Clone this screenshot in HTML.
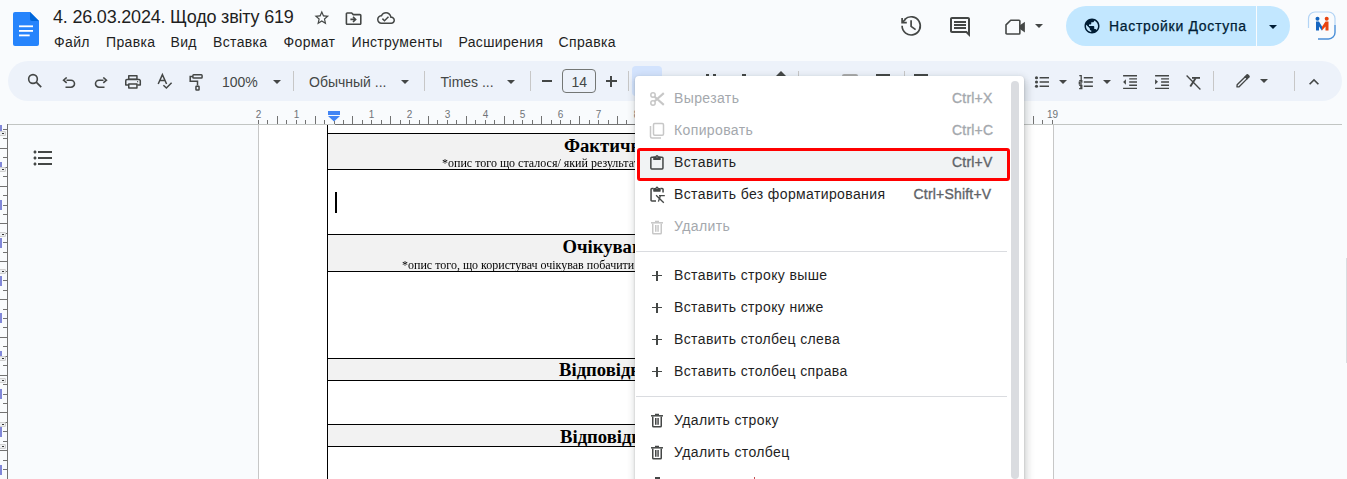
<!DOCTYPE html>
<html><head><meta charset="utf-8">
<style>
*{box-sizing:border-box;margin:0;padding:0}
html,body{width:1347px;height:479px;overflow:hidden;background:#f9fbfd;font-family:"Liberation Sans",sans-serif;color:#1f1f1f}
.a{position:absolute}
.t{position:absolute;white-space:pre;line-height:1}
svg{position:absolute;display:block}
.ic{fill:#444746}
.mb{font-size:14px;color:#1f1f1f;letter-spacing:0.35px}
.sep{position:absolute;width:1px;background:#c7c7c7}
.rl{font-size:10px;color:#6f7378}
.hl{left:327px;width:660px;height:1px;background:#000}
.ser{font-family:"Liberation Serif",serif;font-weight:bold;font-size:18.67px;color:#000}
.sub{font-family:"Liberation Serif",serif;font-size:12px;color:#000;transform:scaleY(1.12);transform-origin:0 0}
.mi{font-size:14px;letter-spacing:0.38px;color:#1f1f1f}
.sc{font-size:14px;-webkit-text-stroke:0.35px currentColor;letter-spacing:0.2px;color:#5f6368}
.dis{color:#a4a8ad}
.plus{left:652px;width:10px;height:1.3px;background:#444746}
.plusv{left:656.35px;width:1.3px;height:10px;background:#444746}
.arr{position:absolute;width:0;height:0;border-left:4px solid transparent;border-right:4px solid transparent;border-top:4.5px solid #444746}
</style></head><body>

<!-- doc icon -->
<svg style="left:13px;top:12px" width="26" height="34" viewBox="0 0 26 34">
 <path d="M2 0h15l9 9v23a2 2 0 0 1-2 2H2a2 2 0 0 1-2-2V2a2 2 0 0 1 2-2z" fill="#2684fc"/>
 <path d="M17 0l9 9h-7a2 2 0 0 1-2-2z" fill="#0066da"/>
 <rect x="6" y="13.4" width="14" height="1.8" fill="#fff"/>
 <rect x="6" y="18" width="14" height="1.8" fill="#fff"/>
 <rect x="6" y="22.5" width="10.7" height="1.8" fill="#fff"/>
</svg>

<div class="t" style="left:53px;top:8.2px;font-size:18px;color:#1f1f1f;letter-spacing:-0.2px">4. 26.03.2024. Щодо звіту 619</div>

<!-- title icons -->
<svg style="left:313px;top:9.2px" width="17.6" height="17.6" viewBox="0 0 24 24"><path class="ic" d="M22 9.24l-7.19-.62L12 2 9.19 8.63 2 9.24l5.46 4.73L5.82 21 12 17.27 18.18 21l-1.63-7.03L22 9.24zM12 15.4l-3.76 2.27 1-4.28-3.32-2.88 4.38-.38L12 6.1l1.71 4.04 4.38.38-3.32 2.88 1 4.28L12 15.4z"/></svg>
<svg style="left:344.4px;top:8.8px" width="19.2" height="19.2" viewBox="0 0 24 24"><path class="ic" d="M20 6h-8l-2-2H4c-1.1 0-1.99.9-1.99 2L2 18c0 1.1.9 2 2 2h16c1.1 0 2-.9 2-2V8c0-1.1-.9-2-2-2zm0 12H4V6h5.17l2 2H20v10zm-7.84-6H8v2h4.16l-1.59 1.59L11.99 17 16 13.01 11.99 9l-1.41 1.41L12.16 12z"/></svg>
<svg style="left:377.1px;top:9px" width="18" height="18" viewBox="0 0 24 24"><path class="ic" d="M19.35 10.04C18.67 6.59 15.64 4 12 4 9.11 4 6.6 5.640 5.35 8.04 2.34 8.36 0 10.91 0 14c0 3.31 2.69 6 6 6h13c2.76 0 5-2.24 5-5 0-2.64-2.05-4.78-4.650-4.96zM19 18H6c-2.21 0-4-1.79-4-4 0-2.05 1.53-3.76 3.56-3.97l1.07-.11.5-.95C8.08 7.14 9.94 6 12 6c2.62 0 4.88 1.86 5.39 4.43l.3 1.5 1.53.11c1.56.1 2.78 1.41 2.78 2.96 0 1.65-1.35 3-3 3zm-9-3.82l-2.09-2.09L6.5 13.5 10 17l6.01-6.01-1.41-1.41z"/></svg>

<!-- menu bar -->
<div class="t mb" style="left:54px;top:35px">Файл</div>
<div class="t mb" style="left:106px;top:35px">Правка</div>
<div class="t mb" style="left:170.5px;top:35px">Вид</div>
<div class="t mb" style="left:213px;top:35px">Вставка</div>
<div class="t mb" style="left:283.5px;top:35px">Формат</div>
<div class="t mb" style="left:351.5px;top:35px">Инструменты</div>
<div class="t mb" style="left:458.5px;top:35px">Расширения</div>
<div class="t mb" style="left:558.5px;top:35px">Справка</div>

<!-- right header -->
<svg style="left:896px;top:12px" width="30" height="28" viewBox="896 12 30 28"><g fill="none" stroke="#444746" stroke-width="1.7"><path d="M902.1 25.8A9.1 9.1 0 1 0 904.8 19.4"/><path d="M902.1 18.1V22.6H906.8" stroke-linejoin="miter"/><path d="M902.6 22.1L905.6 19.1"/><path d="M911.1 20.2V26.4L915.6 29.6"/></g></svg>
<svg style="left:948px;top:15px" width="24" height="24" viewBox="0 0 24 24"><path class="ic" d="M21.99 4c0-1.1-.89-2-1.99-2H4c-1.1 0-2 .9-2 2v12c0 1.1.9 2 2 2h14l4 4-.01-18zM20 4v13.17L18.83 16H4V4h16zM6 12h12v2H6zm0-3h12v2H6zm0-3h12v2H6z"/></svg>
<svg style="left:1000px;top:15px" width="30" height="24" viewBox="1000 15 30 24"><path d="M1010.7 20.2H1019a.85 .85 0 0 1 .85.85V33.15a.85 .85 0 0 1-.85.85H1006.85a.85 .85 0 0 1-.85-.85V24.9z" fill="none" stroke="#444746" stroke-width="1.6" stroke-linejoin="round"/><path d="M1019.9 25.2L1024.9 21.8V32.4L1019.9 29z" fill="#444746"/></svg>
<div class="arr" style="left:1035px;top:24px"></div>

<div class="a" style="left:1066px;top:6px;width:224px;height:40px;border-radius:20px;background:#c2e7ff"></div>
<div class="a" style="left:1256px;top:6px;width:1px;height:40px;background:#f9fbfd"></div>
<svg style="left:1083px;top:17px" width="18" height="18" viewBox="0 0 24 24"><path fill="#001d35" d="M12 2C6.48 2 2 6.48 2 12s4.48 10 10 10 10-4.48 10-10S17.52 2 12 2zm-1 17.93c-3.95-.49-7-3.85-7-7.93 0-.62.08-1.21.21-1.79L9 15v1c0 1.1.9 2 2 2v1.93zm6.9-2.54c-.26-.81-1-1.39-1.9-1.39h-1v-3c0-.55-.45-1-1-1H8v-2h2c.55 0 1-.45 1-1V7h2c1.1 0 2-.9 2-2v-.41c2.93 1.19 5 4.060 5 7.41 0 2.08-.8 3.97-2.1 5.39z"/></svg>
<div class="t" style="left:1109px;top:19px;font-size:14px;-webkit-text-stroke:0.25px #001d35;color:#001d35;letter-spacing:0.7px">Настройки Доступа</div>
<div class="arr" style="left:1269px;top:24.5px;border-top-color:#001d35"></div>

<!-- avatar -->
<svg style="left:1307px;top:11px" width="30" height="30" viewBox="0 0 30 30">
 <path d="M1.5 17V7.5a6.5 6.5 0 0 1 6.5-6.5H21.5a6.5 6.5 0 0 1 6.5 6.5V14" fill="none" stroke="#b3d4f5" stroke-width="1.2"/><path d="M28 14V21.5a6.5 6.5 0 0 1-6.5 6.5H11" fill="none" stroke="#4a8fd8" stroke-width="1.4"/>
 <circle cx="10.5" cy="7.8" r="2" fill="#1565c0"/>
 <circle cx="19.7" cy="7.8" r="2" fill="#e8430f"/>
 <path d="M9 10.5h3l3 5 0 4.3-3-4.3v4h-3z" fill="#1565c0"/>
 <path d="M21.5 10.5h-3l-3.5 5.2v3.9l3.5-4.2v4.2h3z" fill="#e8430f"/>
</svg>

<!-- toolbar -->
<div class="a" style="left:8px;top:61px;width:1334px;height:40px;border-radius:20px;background:#edf2fa"></div>

<svg style="left:20px;top:68px" width="30" height="27" viewBox="20 68 30 27"><circle cx="33" cy="79" r="4.35" fill="none" stroke="#444746" stroke-width="1.6"/><path d="M36.2 82.2L41.2 87.2" stroke="#444746" stroke-width="1.7"/></svg>
<svg style="left:62px;top:77px" width="14" height="14" viewBox="0 0 14 14"><path d="M4.5 3.2H9a3.5 3.5 0 0 1 0 7H3.5" fill="none" stroke="#444746" stroke-width="1.6"/><path d="M4.7 0.5L1.6 3.2l3.1 2.7" fill="none" stroke="#444746" stroke-width="1.6"/></svg>
<svg style="left:94px;top:77px" width="14" height="14" viewBox="0 0 14 14"><path d="M9.5 3.2H5a3.5 3.5 0 0 0 0 7H10.5" fill="none" stroke="#444746" stroke-width="1.6"/><path d="M9.3 0.5l3.1 2.7-3.1 2.7" fill="none" stroke="#444746" stroke-width="1.6"/></svg>
<svg style="left:118px;top:68px" width="90" height="27" viewBox="118 68 90 27">
 <g fill="none" stroke="#444746" stroke-width="1.5" stroke-linejoin="round">
  <rect x="128.75" y="75.75" width="8.2" height="3.5"/>
  <path d="M128.5 85H125.75V80.8a1.2 1.2 0 0 1 1.2-1.2H139.1a1.2 1.2 0 0 1 1.2 1.2V85H137.3"/>
  <rect x="128.75" y="83.95" width="8.2" height="4"/>
  <path d="M158.2 84L162.4 74.6L166.6 84M159.8 80.4H165" stroke-linejoin="miter"/>
  <path d="M163.4 85.2L166.4 88L171.6 82.8" stroke-linejoin="miter"/>
  <rect x="192.9" y="74.85" width="9.2" height="3.2" rx="0.8"/>
  <path d="M192.9 76.45H190.2V81.2H197.5V85.5" stroke-linejoin="miter"/>
  <rect x="195.95" y="86.15" width="3.1" height="3.8" rx="0.5"/>
 </g>
 <circle cx="137.6" cy="81.7" r="0.6" fill="#444746"/>
</svg>
<div class="t" style="left:222px;top:75px;font-size:14px;color:#444746">100%</div>
<div class="arr" style="left:272.5px;top:80px"></div>
<div class="sep" style="left:293px;top:71px;height:20px"></div>
<div class="t" style="left:309px;top:75px;font-size:14px;color:#444746">Обычный ...</div>
<div class="arr" style="left:401px;top:80px"></div>
<div class="sep" style="left:424px;top:71px;height:20px"></div>
<div class="t" style="left:440.5px;top:75px;font-size:14px;color:#444746">Times ...</div>
<div class="arr" style="left:507px;top:80px"></div>
<div class="sep" style="left:530px;top:71px;height:20px"></div>
<div class="a" style="left:541.5px;top:80.2px;width:10.5px;height:1.6px;background:#444746"></div>
<div class="a" style="left:562px;top:69px;width:34px;height:24px;border:1px solid #747775;border-radius:4px"></div>
<div class="t" style="left:571.5px;top:75px;font-size:14px;color:#444746">14</div>
<div class="a" style="left:605.5px;top:80.2px;width:11px;height:1.6px;background:#444746"></div>
<div class="a" style="left:610.2px;top:75.5px;width:1.6px;height:11px;background:#444746"></div>
<div class="sep" style="left:627.5px;top:71px;height:20px"></div>
<div class="a" style="left:632px;top:66px;width:30px;height:30px;border-radius:4px;background:#d3e3fd"></div>

<!-- tips of icons under menu -->
<div class="a" style="left:706px;top:74px;width:3px;height:3px;background:#444746"></div>
<div class="a" style="left:713px;top:74px;width:3px;height:3px;background:#444746"></div>
<div class="a" style="left:742px;top:74px;width:4px;height:3px;background:#444746"></div>
<svg style="left:776px;top:71px" width="10" height="6" viewBox="0 0 10 6"><path d="M5 0L10 5H0z" fill="#444746"/></svg>
<div class="sep" style="left:798px;top:71px;height:10px"></div>
<div class="a" style="left:842px;top:74px;width:16px;height:4px;border-radius:2px 2px 0 0;background:#aaa"></div>
<div class="a" style="left:876px;top:74px;width:14px;height:3px;background:#444746"></div>
<div class="sep" style="left:903.5px;top:71px;height:10px"></div>
<div class="a" style="left:914px;top:74px;width:14px;height:3px;background:#444746"></div>

<!-- right toolbar icons -->
<svg style="left:1030px;top:70px" width="180" height="24" viewBox="1030 70 180 24"><g fill="#444746"><circle cx="1036.5" cy="77.7" r="1.55"/><circle cx="1036.5" cy="82" r="1.55"/><circle cx="1036.5" cy="86.2" r="1.55"/><path d="M1125.9 79.2v5.5l-2.8-2.75z M1155.1 79.2v5.3l2.9-2.65z"/></g><g fill="none" stroke="#444746" stroke-width="1.35"><path d="M1039.6 77.7H1049M1039.6 82H1049M1039.6 86.2H1049"/><path d="M1083.8 77.7H1092.9M1083.8 82H1092.9M1083.8 86.2H1092.9"/><path d="M1079.3 75.6h1.9v4.4 M1079.2 80.7h2.6v1.5h-2.5v1.6h2.6 M1079.2 85.4h2.6v3.3h-2.7 M1080 87h1.8" stroke-width="1.3"/><path d="M1123.1 75.75H1137M1129.2 78.8H1137M1129.2 82H1137M1129.2 85.2H1137M1123.1 88.3H1137"/><path d="M1155.1 75.75H1169M1161.1 78.8H1169M1161.1 82H1169M1161.1 85.2H1169M1155.1 88.3H1169"/><path d="M1186.6 75.6L1200.4 89.4"/><path d="M1192 77.9H1200" stroke-width="1.8"/><path d="M1195.6 78.3L1190.3 86.6" stroke-width="1.9"/></g></svg>
<div class="arr" style="left:1059px;top:80px"></div>

<div class="arr" style="left:1103px;top:80px"></div>



<div class="sep" style="left:1213px;top:71px;height:20px"></div>
<svg style="left:1228px;top:68px" width="30" height="26" viewBox="1228 68 30 26"><g transform="translate(1243,80.9) rotate(-45)"><path d="M-6.9 -1.4H4.6V1.4H-6.9L-8.5 0z" fill="none" stroke="#444746" stroke-width="1.35" stroke-linejoin="round"/><path d="M4 -2.05H7.2a1 1 0 0 1 1 1V1.05a1 1 0 0 1-1 1H4z" fill="#444746"/></g></svg>
<div class="arr" style="left:1260px;top:79px"></div>
<div class="sep" style="left:1294px;top:71px;height:20px"></div>
<svg style="left:1304px;top:72px" width="20" height="20" viewBox="0 0 24 24"><path class="ic" d="M12 8l-6 6 1.41 1.41L12 10.83l4.59 4.58L18 14z"/></svg>

<!-- rulers -->
<div class="a" style="left:7px;top:124px;width:1335px;height:1px;background:#c2c5c3"></div>
<div class="a" style="left:334.5px;top:124px;width:680px;height:1px;background:#727272"></div>
<div class="a" style="left:1346px;top:258px;width:1px;height:105px;background:#dadce0"></div>
<div class="a" style="left:7px;top:124px;width:1px;height:355px;background:#727272"></div>
<div class="t rl" style="left:248.50px;top:109.5px;width:20px;text-align:center">2</div>
<div class="a" style="left:258px;top:120px;width:1px;height:4px;background:#727272"></div>
<div class="a" style="left:267px;top:120px;width:1px;height:4px;background:#727272"></div>
<div class="a" style="left:277px;top:116px;width:1px;height:8px;background:#727272"></div>
<div class="a" style="left:286px;top:120px;width:1px;height:4px;background:#727272"></div>
<div class="t rl" style="left:286.50px;top:109.5px;width:20px;text-align:center">1</div>
<div class="a" style="left:296px;top:120px;width:1px;height:4px;background:#727272"></div>
<div class="a" style="left:305px;top:120px;width:1px;height:4px;background:#727272"></div>
<div class="a" style="left:315px;top:116px;width:1px;height:8px;background:#727272"></div>
<div class="a" style="left:324px;top:120px;width:1px;height:4px;background:#727272"></div>
<div class="a" style="left:343px;top:120px;width:1px;height:4px;background:#727272"></div>
<div class="a" style="left:352px;top:116px;width:1px;height:8px;background:#727272"></div>
<div class="a" style="left:362px;top:120px;width:1px;height:4px;background:#727272"></div>
<div class="t rl" style="left:361.50px;top:109.5px;width:20px;text-align:center">1</div>
<div class="a" style="left:371px;top:120px;width:1px;height:4px;background:#727272"></div>
<div class="a" style="left:381px;top:120px;width:1px;height:4px;background:#727272"></div>
<div class="a" style="left:390px;top:116px;width:1px;height:8px;background:#727272"></div>
<div class="a" style="left:400px;top:120px;width:1px;height:4px;background:#727272"></div>
<div class="t rl" style="left:399.50px;top:109.5px;width:20px;text-align:center">2</div>
<div class="a" style="left:409px;top:120px;width:1px;height:4px;background:#727272"></div>
<div class="a" style="left:419px;top:120px;width:1px;height:4px;background:#727272"></div>
<div class="a" style="left:428px;top:116px;width:1px;height:8px;background:#727272"></div>
<div class="a" style="left:437px;top:120px;width:1px;height:4px;background:#727272"></div>
<div class="t rl" style="left:437.50px;top:109.5px;width:20px;text-align:center">3</div>
<div class="a" style="left:447px;top:120px;width:1px;height:4px;background:#727272"></div>
<div class="a" style="left:456px;top:120px;width:1px;height:4px;background:#727272"></div>
<div class="a" style="left:466px;top:116px;width:1px;height:8px;background:#727272"></div>
<div class="a" style="left:475px;top:120px;width:1px;height:4px;background:#727272"></div>
<div class="t rl" style="left:475.50px;top:109.5px;width:20px;text-align:center">4</div>
<div class="a" style="left:485px;top:120px;width:1px;height:4px;background:#727272"></div>
<div class="a" style="left:494px;top:120px;width:1px;height:4px;background:#727272"></div>
<div class="a" style="left:504px;top:116px;width:1px;height:8px;background:#727272"></div>
<div class="a" style="left:513px;top:120px;width:1px;height:4px;background:#727272"></div>
<div class="t rl" style="left:512.50px;top:109.5px;width:20px;text-align:center">5</div>
<div class="a" style="left:522px;top:120px;width:1px;height:4px;background:#727272"></div>
<div class="a" style="left:532px;top:120px;width:1px;height:4px;background:#727272"></div>
<div class="a" style="left:541px;top:116px;width:1px;height:8px;background:#727272"></div>
<div class="a" style="left:551px;top:120px;width:1px;height:4px;background:#727272"></div>
<div class="t rl" style="left:550.50px;top:109.5px;width:20px;text-align:center">6</div>
<div class="a" style="left:560px;top:120px;width:1px;height:4px;background:#727272"></div>
<div class="a" style="left:570px;top:120px;width:1px;height:4px;background:#727272"></div>
<div class="a" style="left:579px;top:116px;width:1px;height:8px;background:#727272"></div>
<div class="a" style="left:589px;top:120px;width:1px;height:4px;background:#727272"></div>
<div class="t rl" style="left:588.50px;top:109.5px;width:20px;text-align:center">7</div>
<div class="a" style="left:598px;top:120px;width:1px;height:4px;background:#727272"></div>
<div class="a" style="left:608px;top:120px;width:1px;height:4px;background:#727272"></div>
<div class="a" style="left:617px;top:116px;width:1px;height:8px;background:#727272"></div>
<div class="a" style="left:626px;top:120px;width:1px;height:4px;background:#727272"></div>
<div class="t rl" style="left:626.50px;top:109.5px;width:20px;text-align:center">8</div>
<div class="a" style="left:636px;top:120px;width:1px;height:4px;background:#727272"></div>
<div class="a" style="left:645px;top:120px;width:1px;height:4px;background:#727272"></div>
<div class="a" style="left:655px;top:116px;width:1px;height:8px;background:#727272"></div>
<div class="a" style="left:664px;top:120px;width:1px;height:4px;background:#727272"></div>
<div class="t rl" style="left:664.50px;top:109.5px;width:20px;text-align:center">9</div>
<div class="a" style="left:674px;top:120px;width:1px;height:4px;background:#727272"></div>
<div class="a" style="left:683px;top:120px;width:1px;height:4px;background:#727272"></div>
<div class="a" style="left:693px;top:116px;width:1px;height:8px;background:#727272"></div>
<div class="a" style="left:702px;top:120px;width:1px;height:4px;background:#727272"></div>
<div class="t rl" style="left:701.50px;top:109.5px;width:20px;text-align:center">10</div>
<div class="a" style="left:711px;top:120px;width:1px;height:4px;background:#727272"></div>
<div class="a" style="left:721px;top:120px;width:1px;height:4px;background:#727272"></div>
<div class="a" style="left:730px;top:116px;width:1px;height:8px;background:#727272"></div>
<div class="a" style="left:740px;top:120px;width:1px;height:4px;background:#727272"></div>
<div class="t rl" style="left:739.50px;top:109.5px;width:20px;text-align:center">11</div>
<div class="a" style="left:749px;top:120px;width:1px;height:4px;background:#727272"></div>
<div class="a" style="left:759px;top:120px;width:1px;height:4px;background:#727272"></div>
<div class="a" style="left:768px;top:116px;width:1px;height:8px;background:#727272"></div>
<div class="a" style="left:778px;top:120px;width:1px;height:4px;background:#727272"></div>
<div class="t rl" style="left:777.50px;top:109.5px;width:20px;text-align:center">12</div>
<div class="a" style="left:787px;top:120px;width:1px;height:4px;background:#727272"></div>
<div class="a" style="left:796px;top:120px;width:1px;height:4px;background:#727272"></div>
<div class="a" style="left:806px;top:116px;width:1px;height:8px;background:#727272"></div>
<div class="a" style="left:815px;top:120px;width:1px;height:4px;background:#727272"></div>
<div class="t rl" style="left:815.50px;top:109.5px;width:20px;text-align:center">13</div>
<div class="a" style="left:825px;top:120px;width:1px;height:4px;background:#727272"></div>
<div class="a" style="left:834px;top:120px;width:1px;height:4px;background:#727272"></div>
<div class="a" style="left:844px;top:116px;width:1px;height:8px;background:#727272"></div>
<div class="a" style="left:853px;top:120px;width:1px;height:4px;background:#727272"></div>
<div class="t rl" style="left:853.50px;top:109.5px;width:20px;text-align:center">14</div>
<div class="a" style="left:863px;top:120px;width:1px;height:4px;background:#727272"></div>
<div class="a" style="left:872px;top:120px;width:1px;height:4px;background:#727272"></div>
<div class="a" style="left:882px;top:116px;width:1px;height:8px;background:#727272"></div>
<div class="a" style="left:891px;top:120px;width:1px;height:4px;background:#727272"></div>
<div class="t rl" style="left:890.50px;top:109.5px;width:20px;text-align:center">15</div>
<div class="a" style="left:900px;top:120px;width:1px;height:4px;background:#727272"></div>
<div class="a" style="left:910px;top:120px;width:1px;height:4px;background:#727272"></div>
<div class="a" style="left:919px;top:116px;width:1px;height:8px;background:#727272"></div>
<div class="a" style="left:929px;top:120px;width:1px;height:4px;background:#727272"></div>
<div class="t rl" style="left:928.50px;top:109.5px;width:20px;text-align:center">16</div>
<div class="a" style="left:938px;top:120px;width:1px;height:4px;background:#727272"></div>
<div class="a" style="left:948px;top:120px;width:1px;height:4px;background:#727272"></div>
<div class="a" style="left:957px;top:116px;width:1px;height:8px;background:#727272"></div>
<div class="a" style="left:967px;top:120px;width:1px;height:4px;background:#727272"></div>
<div class="t rl" style="left:966.50px;top:109.5px;width:20px;text-align:center">17</div>
<div class="a" style="left:976px;top:120px;width:1px;height:4px;background:#727272"></div>
<div class="a" style="left:985px;top:120px;width:1px;height:4px;background:#727272"></div>
<div class="a" style="left:995px;top:116px;width:1px;height:8px;background:#727272"></div>
<div class="a" style="left:1004px;top:120px;width:1px;height:4px;background:#727272"></div>
<div class="t rl" style="left:1004.50px;top:109.5px;width:20px;text-align:center">18</div>
<div class="a" style="left:1014px;top:120px;width:1px;height:4px;background:#727272"></div>
<div class="a" style="left:1023px;top:120px;width:1px;height:4px;background:#727272"></div>
<div class="a" style="left:1033px;top:116px;width:1px;height:8px;background:#727272"></div>
<div class="a" style="left:1042px;top:120px;width:1px;height:4px;background:#727272"></div>
<div class="t rl" style="left:1042.50px;top:109.5px;width:20px;text-align:center">19</div>
<div class="a" style="left:1052px;top:120px;width:1px;height:4px;background:#727272"></div>
<div class="a" style="left:0px;top:124.50px;width:1.6px;height:10px;background:#4f56c8;opacity:.7"></div>
<div class="a" style="left:3px;top:129px;width:4px;height:1px;background:#727272"></div>
<div class="a" style="left:3px;top:138px;width:4px;height:1px;background:#727272"></div>
<div class="a" style="left:0px;top:148px;width:7px;height:1px;background:#727272"></div>
<div class="a" style="left:3px;top:157px;width:4px;height:1px;background:#727272"></div>
<div class="a" style="left:0px;top:162.30px;width:1.6px;height:10px;background:#4f56c8;opacity:.7"></div>
<div class="a" style="left:3px;top:167px;width:4px;height:1px;background:#727272"></div>
<div class="a" style="left:3px;top:176px;width:4px;height:1px;background:#727272"></div>
<div class="a" style="left:0px;top:186px;width:7px;height:1px;background:#727272"></div>
<div class="a" style="left:3px;top:195px;width:4px;height:1px;background:#727272"></div>
<div class="a" style="left:0px;top:200.10px;width:1.6px;height:10px;background:#4f56c8;opacity:.7"></div>
<div class="a" style="left:3px;top:205px;width:4px;height:1px;background:#727272"></div>
<div class="a" style="left:3px;top:214px;width:4px;height:1px;background:#727272"></div>
<div class="a" style="left:0px;top:223px;width:7px;height:1px;background:#727272"></div>
<div class="a" style="left:3px;top:233px;width:4px;height:1px;background:#727272"></div>
<div class="a" style="left:0px;top:237.89px;width:1.6px;height:10px;background:#4f56c8;opacity:.7"></div>
<div class="a" style="left:3px;top:242px;width:4px;height:1px;background:#727272"></div>
<div class="a" style="left:3px;top:252px;width:4px;height:1px;background:#727272"></div>
<div class="a" style="left:0px;top:261px;width:7px;height:1px;background:#727272"></div>
<div class="a" style="left:3px;top:271px;width:4px;height:1px;background:#727272"></div>
<div class="a" style="left:0px;top:275.69px;width:1.6px;height:10px;background:#4f56c8;opacity:.7"></div>
<div class="a" style="left:3px;top:280px;width:4px;height:1px;background:#727272"></div>
<div class="a" style="left:3px;top:290px;width:4px;height:1px;background:#727272"></div>
<div class="a" style="left:0px;top:299px;width:7px;height:1px;background:#727272"></div>
<div class="a" style="left:3px;top:309px;width:4px;height:1px;background:#727272"></div>
<div class="a" style="left:0px;top:313.48px;width:1.6px;height:10px;background:#4f56c8;opacity:.7"></div>
<div class="a" style="left:3px;top:318px;width:4px;height:1px;background:#727272"></div>
<div class="a" style="left:3px;top:327px;width:4px;height:1px;background:#727272"></div>
<div class="a" style="left:0px;top:337px;width:7px;height:1px;background:#727272"></div>
<div class="a" style="left:3px;top:346px;width:4px;height:1px;background:#727272"></div>
<div class="a" style="left:0px;top:351.28px;width:1.6px;height:10px;background:#4f56c8;opacity:.7"></div>
<div class="a" style="left:3px;top:356px;width:4px;height:1px;background:#727272"></div>
<div class="a" style="left:3px;top:365px;width:4px;height:1px;background:#727272"></div>
<div class="a" style="left:0px;top:375px;width:7px;height:1px;background:#727272"></div>
<div class="a" style="left:3px;top:384px;width:4px;height:1px;background:#727272"></div>
<div class="a" style="left:0px;top:389.07px;width:1.6px;height:10px;background:#4f56c8;opacity:.7"></div>
<div class="a" style="left:3px;top:394px;width:4px;height:1px;background:#727272"></div>
<div class="a" style="left:3px;top:403px;width:4px;height:1px;background:#727272"></div>
<div class="a" style="left:0px;top:412px;width:7px;height:1px;background:#727272"></div>
<div class="a" style="left:3px;top:422px;width:4px;height:1px;background:#727272"></div>
<div class="a" style="left:0px;top:426.87px;width:1.6px;height:10px;background:#4f56c8;opacity:.7"></div>
<div class="a" style="left:3px;top:431px;width:4px;height:1px;background:#727272"></div>
<div class="a" style="left:3px;top:441px;width:4px;height:1px;background:#727272"></div>
<div class="a" style="left:0px;top:450px;width:7px;height:1px;background:#727272"></div>
<div class="a" style="left:3px;top:460px;width:4px;height:1px;background:#727272"></div>
<div class="a" style="left:0px;top:464.66px;width:1.6px;height:10px;background:#4f56c8;opacity:.7"></div>
<div class="a" style="left:3px;top:469px;width:4px;height:1px;background:#727272"></div>
<div class="a" style="left:3px;top:479px;width:4px;height:1px;background:#727272"></div>
<div class="a" style="left:-1px;top:130.5px;width:6.5px;height:5px;background:#eceef0;border:1px solid #d0d0d0;border-radius:1px"></div>
<div class="a" style="left:2px;top:132.5px;width:2px;height:1px;background:#333"></div>
<div class="a" style="left:-1px;top:166.5px;width:6.5px;height:5px;background:#eceef0;border:1px solid #d0d0d0;border-radius:1px"></div>
<div class="a" style="left:2px;top:168.5px;width:2px;height:1px;background:#333"></div>
<div class="a" style="left:-1px;top:231.5px;width:6.5px;height:5px;background:#eceef0;border:1px solid #d0d0d0;border-radius:1px"></div>
<div class="a" style="left:2px;top:233.5px;width:2px;height:1px;background:#333"></div>
<div class="a" style="left:-1px;top:268.5px;width:6.5px;height:5px;background:#eceef0;border:1px solid #d0d0d0;border-radius:1px"></div>
<div class="a" style="left:2px;top:270.5px;width:2px;height:1px;background:#333"></div>
<div class="a" style="left:-1px;top:355.5px;width:6.5px;height:5px;background:#eceef0;border:1px solid #d0d0d0;border-radius:1px"></div>
<div class="a" style="left:2px;top:357.5px;width:2px;height:1px;background:#333"></div>
<div class="a" style="left:-1px;top:377.5px;width:6.5px;height:5px;background:#eceef0;border:1px solid #d0d0d0;border-radius:1px"></div>
<div class="a" style="left:2px;top:379.5px;width:2px;height:1px;background:#333"></div>
<div class="a" style="left:-1px;top:421.5px;width:6.5px;height:5px;background:#eceef0;border:1px solid #d0d0d0;border-radius:1px"></div>
<div class="a" style="left:2px;top:423.5px;width:2px;height:1px;background:#333"></div>
<div class="a" style="left:-1px;top:443.5px;width:6.5px;height:5px;background:#eceef0;border:1px solid #d0d0d0;border-radius:1px"></div>
<div class="a" style="left:2px;top:445.5px;width:2px;height:1px;background:#333"></div>

<!-- outline icon -->
<svg style="left:31px;top:146px" width="24" height="24" viewBox="0 0 24 24"><path class="ic" d="M4 10.5c-.83 0-1.5.67-1.5 1.5s.67 1.5 1.5 1.5 1.5-.67 1.5-1.5-.67-1.5-1.5-1.5zm0-6c-.83 0-1.5.67-1.5 1.5S3.17 7.5 4 7.5 5.5 6.83 5.5 6 4.83 4.5 4 4.5zm0 12c-.83 0-1.5.68-1.5 1.5s.68 1.5 1.5 1.5 1.5-.68 1.5-1.5-.67-1.5-1.5-1.5zM7 19h14v-2H7v2zm0-6h14v-2H7v2zm0-8v2h14V5H7z"/></svg>

<!-- page -->
<div class="a" style="left:258px;top:125px;width:796px;height:354px;background:#fff;border-left:1px solid #c7c7c7;border-right:1px solid #c7c7c7"></div>


<!-- ruler marker -->
<div class="a" style="left:328px;top:111px;width:12px;height:3.5px;background:#4285f4"></div>
<svg style="left:328px;top:116.2px" width="12" height="5.5" viewBox="0 0 12 5.5"><path d="M0 0H12L6 5.5z" fill="#4285f4"/></svg>
<div class="a" style="left:334px;top:121px;width:1px;height:3px;background:#727272"></div>

<!-- table -->
<div class="a" style="left:327px;top:125px;width:660px;height:354px;border-left:1px solid #000;border-right:1px solid #000"></div>
<div class="a" style="left:328px;top:134px;width:658px;height:35px;background:#f2f2f2"></div>
<div class="a" style="left:328px;top:235px;width:658px;height:36px;background:#f2f2f2"></div>
<div class="a" style="left:328px;top:359px;width:658px;height:21px;background:#f2f2f2"></div>
<div class="a" style="left:328px;top:425px;width:658px;height:21px;background:#f2f2f2"></div>
<div class="a hl" style="top:133px"></div>
<div class="a hl" style="top:169px"></div>
<div class="a hl" style="top:234px"></div>
<div class="a hl" style="top:271px"></div>
<div class="a hl" style="top:358px"></div>
<div class="a hl" style="top:380px"></div>
<div class="a hl" style="top:424px"></div>
<div class="a hl" style="top:446px"></div>
<div class="t ser" style="left:564px;top:137.3px">Фактичний результат</div>
<div class="t sub" style="left:442px;top:156px">*опис того що сталося/ який результат отримано</div>
<div class="a" style="left:335px;top:192px;width:2px;height:21px;background:#000"></div>
<div class="t ser" style="left:562.5px;top:238.3px">Очікуваний результат</div>
<div class="t sub" style="left:402px;top:258px">*опис того, що користувач очікував побачити в результаті</div>
<div class="t ser" style="left:559px;top:361.1px">Відповідність</div>
<div class="t ser" style="left:560px;top:428px">Відповідність</div>

<!-- context menu -->
<div class="a" style="left:1024px;top:78px;width:11px;height:401px;background:linear-gradient(90deg,rgba(0,0,0,.055),rgba(0,0,0,0));-webkit-mask-image:linear-gradient(180deg,transparent,#000 10px)"></div>
<div class="a" id="cm" style="left:635px;top:76px;width:389px;height:420px;background:#fff;border-radius:4px;box-shadow:0 2px 6px 2px rgba(60,64,67,.15),0 1px 2px rgba(60,64,67,.3)"></div>
<div class="a" style="left:1011px;top:81px;width:8px;height:398px;border-radius:4px;background:#dadce0"></div>

<div class="a" style="left:637px;top:148px;width:373px;height:33px;background:#f1f3f4;border:3px solid #ff0000;border-radius:3px"></div>

<svg style="left:646px;top:87px" width="22" height="24" viewBox="646 87 22 24"><g fill="none" stroke="#c7c7c7"><circle cx="653" cy="95" r="2.2" stroke-width="1.5"/><circle cx="653" cy="103" r="2.2" stroke-width="1.5"/><path d="M654.6 96.8L663.8 104.9M654.6 101.2L663.8 93.1" stroke-width="2.1"/></g></svg>
<div class="t mi dis" style="left:674px;top:91px">Вырезать</div>
<div class="t sc dis" style="left:952px;top:91px">Ctrl+X</div>

<svg style="left:649px;top:122px" width="16" height="17" viewBox="0 0 16 17"><path d="M1.5 4v10.5a1.5 1.5 0 0 0 1.5 1.5h9" fill="none" stroke="#c7c7c7" stroke-width="1.5"/><rect x="4.5" y="1.5" width="10" height="11.7" rx="1.2" fill="none" stroke="#c7c7c7" stroke-width="1.5"/></svg>
<div class="t mi dis" style="left:674px;top:123px">Копировать</div>
<div class="t sc dis" style="left:952px;top:123px">Ctrl+C</div>

<svg style="left:644px;top:150px" width="24" height="24" viewBox="644 150 24 24"><rect x="650.85" y="157.15" width="12.1" height="11.8" rx=".9" fill="none" stroke="#444746" stroke-width="1.5"/><rect x="653.2" y="156.6" width="7.5" height="3.4" rx=".6" fill="#444746"/><circle cx="657" cy="156.5" r="1.5" fill="#444746"/><circle cx="657" cy="157" r=".5" fill="#d0d0d0"/></svg>
<div class="t mi" style="left:674px;top:155px">Вставить</div>
<div class="t sc" style="left:952px;top:155px">Ctrl+V</div>

<svg style="left:644px;top:183px" width="24" height="24" viewBox="644 183 24 24"><g fill="none" stroke="#444746" stroke-width="1.5"><path d="M656 201H651.9a.85 .85 0 0 1-.85-.85V189.35a.85 .85 0 0 1 .85-.85H653.5M660.5 188.5H662.2a.85 .85 0 0 1 .85.85V192.6"/><path d="M659 195.6H664.8M660.4 195.7L658.4 201.6" stroke-width="1.3"/><path d="M656.1 195.3L663.8 202.8" stroke-width="1.3"/></g><rect x="653.2" y="188" width="7.5" height="3.7" rx=".6" fill="#444746"/><circle cx="657" cy="188" r="1.5" fill="#444746"/><circle cx="657" cy="188.4" r=".5" fill="#d0d0d0"/></svg>
<div class="t mi" style="left:674px;top:187px">Вставить без форматирования</div>
<div class="t sc" style="left:913.5px;top:187px">Ctrl+Shift+V</div>

<svg style="left:650px;top:219.5px" width="14" height="16" viewBox="0 0 14 16"><rect x="5.6" y="5" width="2.6" height="6.8" fill="#e6e6e6"/><g fill="none" stroke="#c7c7c7"><path d="M5 1.4h4" stroke-width="1.3"/><path d="M1 2.8h12" stroke-width="1.5"/><path d="M2.75 3.4V13a.8 .8 0 0 0 .8.8H10.45a.8 .8 0 0 0 .8-.8V3.4" stroke-width="1.5"/><path d="M5.6 5v6.8M8.2 5v6.8" stroke-width="1.2"/></g></svg>
<div class="t mi dis" style="left:674px;top:219px">Удалить</div>

<div class="a" style="left:636px;top:251px;width:371px;height:1px;background:#dadce0"></div>

<div class="a plus" style="top:275px"></div><div class="a plusv" style="top:270.5px"></div>
<div class="t mi" style="left:674px;top:268px">Вставить строку выше</div>
<div class="a plus" style="top:307px"></div><div class="a plusv" style="top:302.5px"></div>
<div class="t mi" style="left:674px;top:300px">Вставить строку ниже</div>
<div class="a plus" style="top:339px"></div><div class="a plusv" style="top:334.5px"></div>
<div class="t mi" style="left:674px;top:332px">Вставить столбец слева</div>
<div class="a plus" style="top:371px"></div><div class="a plusv" style="top:366.5px"></div>
<div class="t mi" style="left:674px;top:364px">Вставить столбец справа</div>

<div class="a" style="left:636px;top:396px;width:371px;height:1px;background:#dadce0"></div>

<svg style="left:650px;top:413px" width="14" height="16" viewBox="0 0 14 16"><rect x="5.6" y="5" width="2.6" height="6.8" fill="#b0b0b0"/><g fill="none" stroke="#444746"><path d="M5 1.4h4" stroke-width="1.3"/><path d="M1 2.8h12" stroke-width="1.5"/><path d="M2.75 3.4V13a.8 .8 0 0 0 .8.8H10.45a.8 .8 0 0 0 .8-.8V3.4" stroke-width="1.5"/><path d="M5.6 5v6.8M8.2 5v6.8" stroke-width="1.2"/></g></svg>
<div class="t mi" style="left:674px;top:413px">Удалить строку</div>
<svg style="left:650px;top:445px" width="14" height="16" viewBox="0 0 14 16"><rect x="5.6" y="5" width="2.6" height="6.8" fill="#b0b0b0"/><g fill="none" stroke="#444746"><path d="M5 1.4h4" stroke-width="1.3"/><path d="M1 2.8h12" stroke-width="1.5"/><path d="M2.75 3.4V13a.8 .8 0 0 0 .8.8H10.45a.8 .8 0 0 0 .8-.8V3.4" stroke-width="1.5"/><path d="M5.6 5v6.8M8.2 5v6.8" stroke-width="1.2"/></g></svg>
<div class="t mi" style="left:674px;top:445px">Удалить столбец</div>
<div class="a" style="left:655px;top:477px;width:4.5px;height:2px;background:#444746"></div>
<div class="a" style="left:754px;top:477px;width:1px;height:2px;background:#c05050"></div>

</body></html>
